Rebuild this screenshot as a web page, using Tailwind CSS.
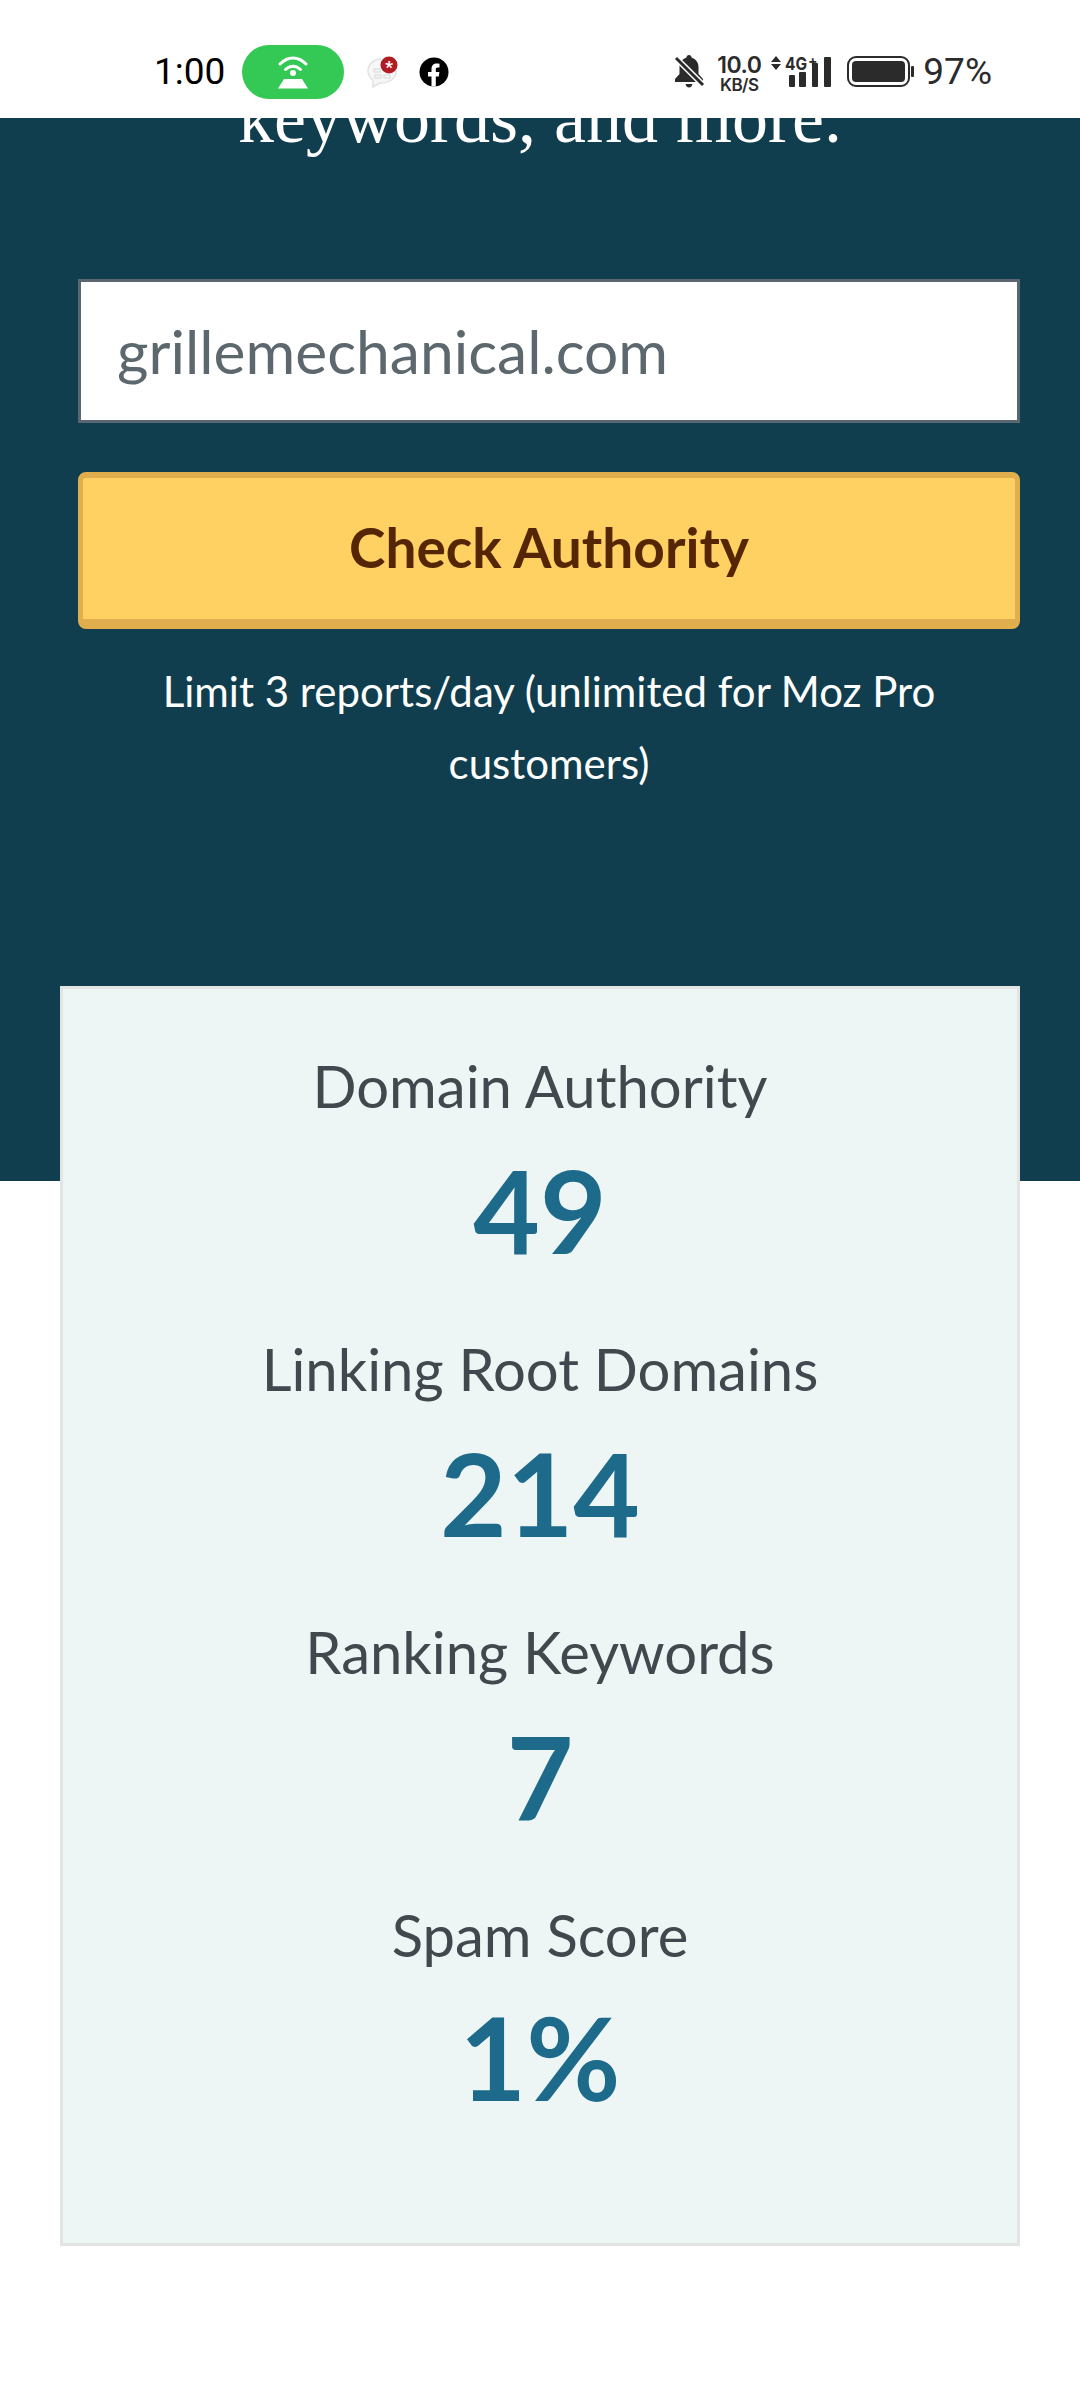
<!DOCTYPE html>
<html lang="en">
<head>
    <meta charset="UTF-8">
    <meta name="viewport" content="width=device-width, initial-scale=1.0">
    <title>Domain Authority Checker</title>
    <script src="https://cdn.jsdelivr.net/npm/@tailwindcss/browser@4"></script>
</head>
<body class="bg-white font-['Lato',sans-serif] w-[1080px] h-[2400px] overflow-hidden">

    <!-- status bar -->
    <div class="h-[118px] flex items-center justify-between bg-white pl-[154px] pr-[88px] pt-[26px]">
        <div class="flex items-center">
            <span class="font-['Roboto',sans-serif] text-[37px] text-black w-[88px]">1:00</span>
            <div class="w-[102px] h-[54px] rounded-full bg-[#34c955] flex items-center justify-center">
                <svg width="34" height="34" viewBox="0 0 34 34" fill="none">
                    <path d="M4 9C12 1 22 1 30 9" stroke="#fff" stroke-width="3" stroke-linecap="round"/>
                    <path d="M9.500 14.500C14 10 20 10 24.500 14.500" stroke="#fff" stroke-width="3" stroke-linecap="round"/>
                    <circle cx="17" cy="18" r="3" fill="#fff"/>
                    <path d="M8 24H26L32 33.500H2Z" fill="#fff"/>
                </svg>
            </div>
            <svg class="ml-[23px]" width="32" height="34" viewBox="0 0 32 34" fill="none">
                <path d="M14 4C7 4 1 9 1 16C1 20 3 23 6 25L6 32L13 28C22 28 29 24 29 16" fill="#f7f7f7" stroke="#e2e2e2" stroke-width="1.500"/>
                <path d="M7 14H13V17H7Z M8 20H14V23H8Z M17 20H23V23H17Z" fill="none" stroke="#e2e2e2" stroke-width="1.500"/>
                <circle cx="22" cy="10" r="8.500" fill="#b01c22"/>
                <text x="22" y="18" text-anchor="middle" font-size="17" font-weight="700" fill="#fff" font-family="Roboto">*</text>
            </svg>
            <svg class="ml-[20px]" width="30" height="30" viewBox="0 0 30 30">
                <circle cx="15" cy="15" r="14.500" fill="#000"/>
                <path d="M12.500 29.500V19.500H9V15H12.500V12C12.500 8.500 14.500 6.500 17.800 6.500C19 6.500 20.500 6.700 20.500 6.700V10.400H18.800C17.200 10.400 16.800 11.300 16.800 12.300V15H20.400L19.800 19.500H16.800V29.500Z" fill="#fff"/>
            </svg>
        </div>
        <div class="flex items-center text-[#2b2b2b]">
            <svg width="32" height="36" viewBox="0 0 32 36">
                <path d="M16 1C17.500 1 18.500 2 18.500 3.500C23 5 25.500 8.500 25.500 13V20L30 25V28H2V25L6.500 20V13C6.500 8.500 9 5 13.500 3.500C13.500 2 14.500 1 16 1Z" fill="#2b2b2b"/>
                <path d="M12.500 30H19.500C19 32.500 17.500 33.500 16 33.500C14.500 33.500 13 32.500 12.500 30Z" fill="#2b2b2b"/>
                <path d="M3 4L30 31" stroke="#fff" stroke-width="6"/>
                <path d="M3 4L30 31" stroke="#2b2b2b" stroke-width="3"/>
            </svg>
            <div class="ml-[10px] mt-[5px] w-[48px] flex flex-col items-center font-['Inter',sans-serif] font-semibold">
                <span class="text-[23px] leading-[20px] tracking-[-0.5px]">10.0</span>
                <span class="text-[17px] leading-[20px] tracking-[-0.5px]">KB/S</span>
            </div>
            <svg class="ml-[8px] overflow-visible" width="60" height="34" viewBox="0 0 60 34">
                <path d="M0 7L5 1L10 7Z M0 9L5 15L10 9Z" fill="#2b2b2b"/>
                <rect x="18" y="20" width="6" height="12" rx="1" fill="#2b2b2b"/>
                <rect x="28" y="17" width="7" height="15" rx="1" fill="#2b2b2b"/>
                <rect x="41" y="8" width="6" height="24" rx="1" fill="#2b2b2b"/>
                <rect x="53" y="2" width="7" height="30" rx="1" fill="#2b2b2b"/>
                <text x="14" y="15" font-size="18" font-weight="700" fill="#2b2b2b" font-family="Inter" textLength="22" lengthAdjust="spacingAndGlyphs">4G</text>
                <text x="37" y="11" font-size="14" font-weight="700" fill="#2b2b2b" font-family="Inter">+</text>
            </svg>
            <svg class="ml-[16px]" width="67" height="32" viewBox="0 0 67 32">
                <rect x="1" y="1" width="61" height="29" rx="8" fill="none" stroke="#2b2b2b" stroke-width="2"/>
                <rect x="5" y="5" width="53" height="21" rx="4" fill="#2b2b2b"/>
                <rect x="64" y="10" width="3" height="11" rx="1" fill="#2b2b2b"/>
            </svg>
            <span class="ml-[9px] font-['Roboto',sans-serif] text-[37px]">97%</span>
        </div>
    </div>

    <!-- hero -->
    <div class="h-[1063px] bg-[#113e4e] overflow-hidden">
        <p class="mt-[-32px] text-center text-white font-['Liberation_Serif',serif] text-[72px] leading-[64px]">keywords, and more.</p>
        <form class="mt-[129px] ml-[78px] mr-[60px]" onsubmit="return false;">
            <div class="h-[144px] flex items-center bg-white border-[3px] border-[#5a6770] px-[36px] text-[60.500px] text-[#5c686d]">grillemechanical.com</div>
            <button type="submit" class="mt-[49px] w-full h-[157px] pb-[2px] rounded-[8px] bg-[#ffd162] border-x-[5px] border-t-[6px] border-b-[10px] border-[#e0ae4c] text-[#552604] text-[55px] font-bold">Check Authority</button>
            <p class="mt-[26px] text-center text-white text-[42px] leading-[72px]">Limit 3 reports/day (unlimited for Moz Pro customers)</p>
        </form>
    </div>

    <!-- metrics card -->
    <div class="relative mt-[-195px] ml-[60px] w-[960px] h-[1260px] bg-[#edf6f5] border-[3px] border-[#e3e4e4] pt-[57px] text-center">
        <div class="text-[58px] leading-[80px] text-[#41484e]">Domain Authority</div>
        <div class="mt-[8px] text-[115px] leading-[150px] font-bold text-[#1d6a8a]">49</div>
        <div class="mt-[45px] text-[58px] leading-[80px] text-[#41484e]">Linking Root Domains</div>
        <div class="mt-[8px] text-[115px] leading-[150px] font-bold text-[#1d6a8a]">214</div>
        <div class="mt-[45px] text-[58px] leading-[80px] text-[#41484e]">Ranking Keywords</div>
        <div class="mt-[8px] text-[115px] leading-[150px] font-bold text-[#1d6a8a]">7</div>
        <div class="mt-[45px] text-[58px] leading-[80px] text-[#41484e]">Spam Score</div>
        <div class="mt-[6px] text-[115px] leading-[150px] font-bold text-[#1d6a8a]">1%</div>
    </div>
</body>
</html>
